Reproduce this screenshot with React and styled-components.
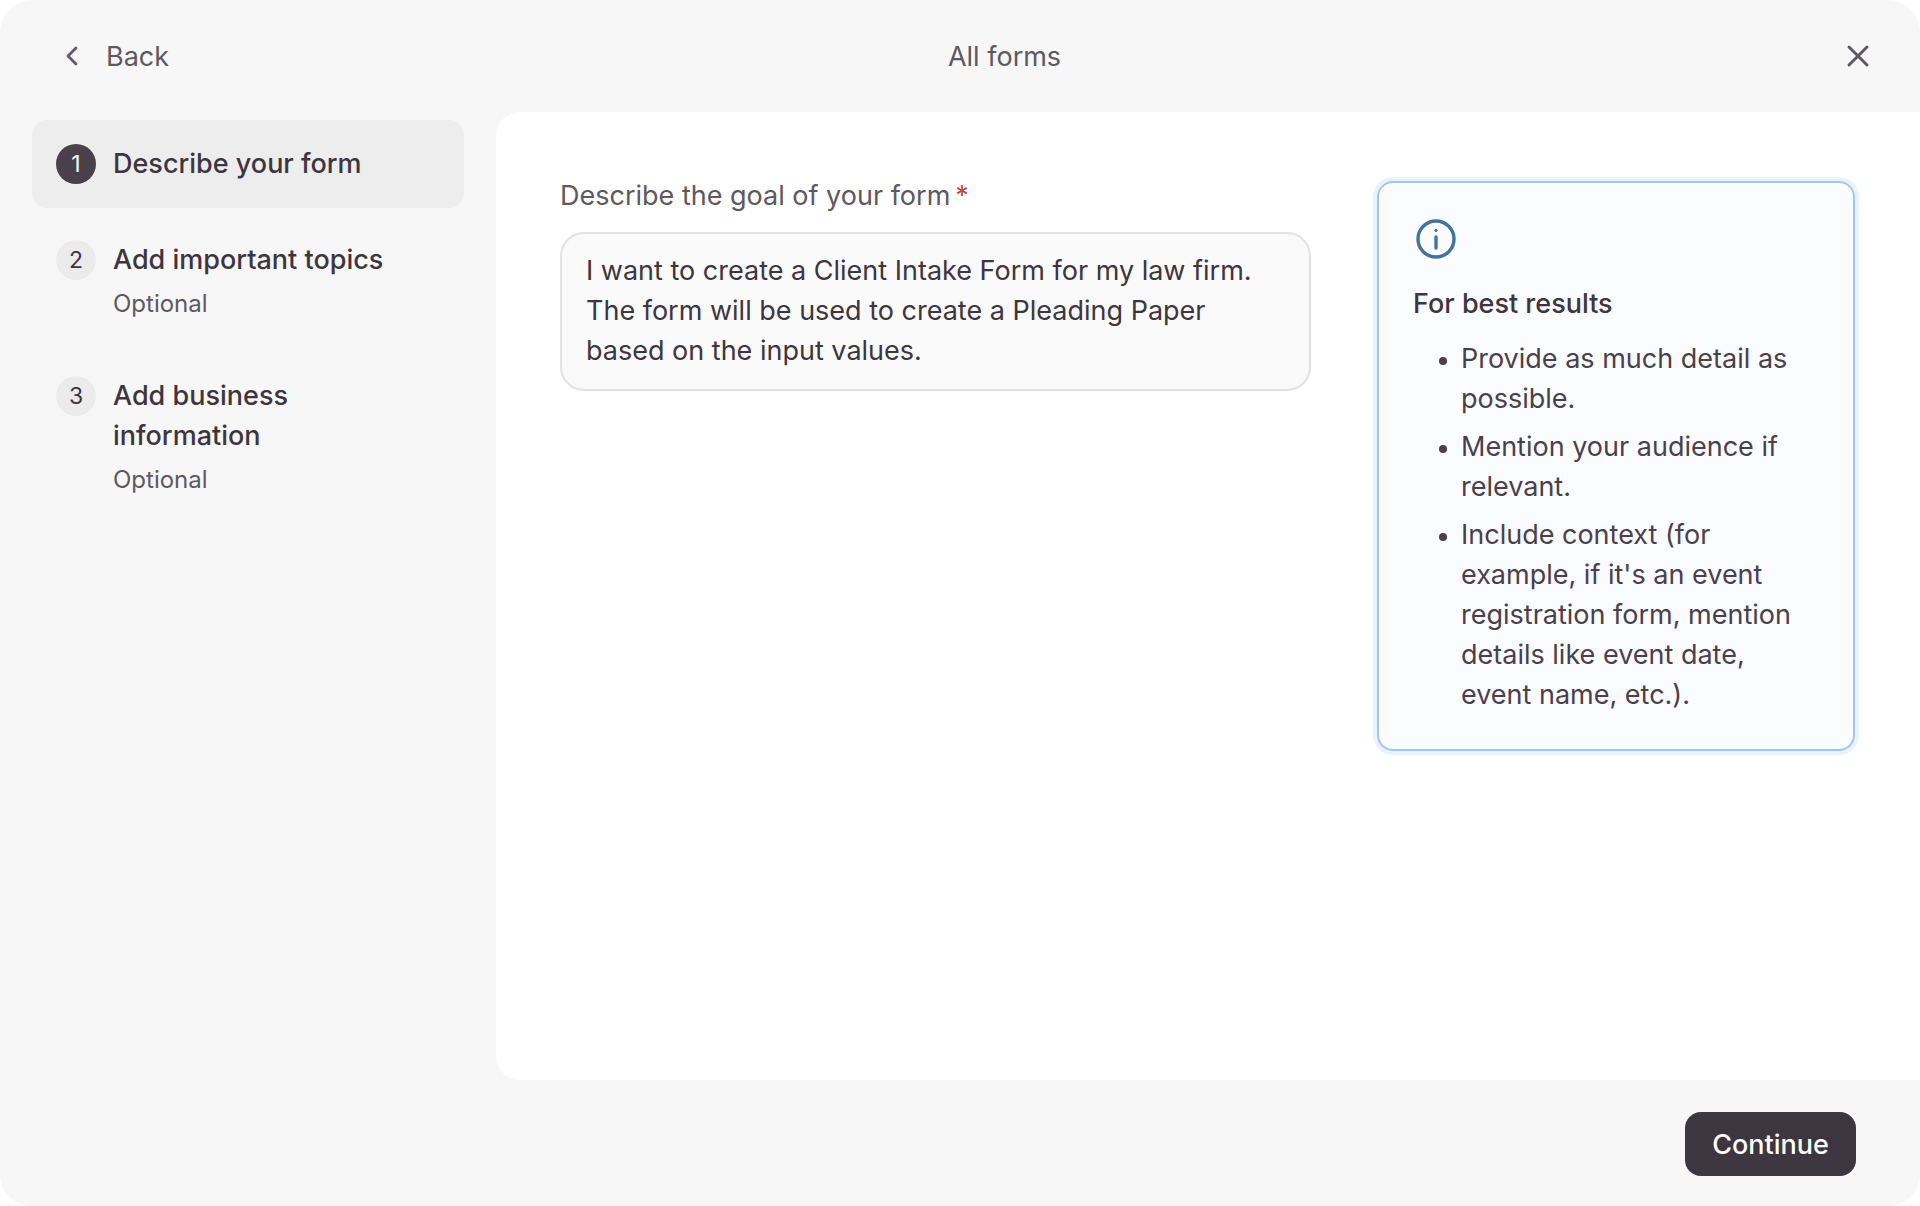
import React from "react";
import styled, { createGlobalStyle } from "styled-components";
import { ChevronLeft, X } from "lucide-react";

const GlobalStyle = createGlobalStyle`
  html, body {
    margin: 0;
    padding: 0;
    background: #fff;
  }
  * {
    box-sizing: border-box;
  }
`;

const Frame = styled.div`
  width: 1920px;
  height: 1206px;
  display: flex;
  flex-direction: column;
  background: #f7f7f7;
  border-radius: 32px;
  overflow: hidden;
  font-family: Inter, "Liberation Sans", sans-serif;
  color: #3d3540;
`;

const Header = styled.header`
  height: 112px;
  flex: none;
  display: flex;
  align-items: center;
  justify-content: space-between;
  padding: 0 44px 0 56px;
`;

const BackButton = styled.div`
  display: flex;
  align-items: center;
  gap: 18px;
  font-size: 27px;
  color: #5d5862;
`;

const HeaderTitle = styled.div`
  font-size: 27px;
  color: #5d5862;
`;

const CloseButton = styled.div`
  display: flex;
  color: #5d5862;
`;

const Body = styled.div`
  flex: 1;
  display: flex;
  min-height: 0;
`;

const Sidebar = styled.nav`
  width: 496px;
  flex: none;
  padding: 8px 32px 0;
  display: flex;
  flex-direction: column;
  gap: 8px;
`;

const Step = styled.div`
  display: flex;
  gap: 17px;
  padding: 24px;
  border-radius: 16px;
  background: ${(p) => (p.$active ? "#ededed" : "transparent")};
`;

const StepNumber = styled.div`
  width: 40px;
  height: 40px;
  flex: none;
  border-radius: 50%;
  display: flex;
  align-items: center;
  justify-content: center;
  font-size: 23px;
  background: ${(p) => (p.$active ? "#4a404c" : "#ebebec")};
  color: ${(p) => (p.$active ? "#fff" : "#3d3540")};
`;

const StepText = styled.div`
  display: flex;
  flex-direction: column;
  gap: 8px;
`;

const StepTitle = styled.div`
  font-size: 27px;
  line-height: 40px;
  font-weight: 500;
`;

const StepHint = styled.div`
  font-size: 24px;
  line-height: 32px;
  color: #5d5862;
`;

const Panel = styled.main`
  flex: 1;
  display: flex;
  justify-content: space-between;
  align-items: flex-start;
  padding: 68px 65px 0 64px;
  background: #fff;
  border-radius: 24px 0 0 24px;
`;

const Field = styled.div`
  width: 751px;
`;

const Label = styled.label`
  display: block;
  font-size: 27px;
  line-height: 32px;
  margin-bottom: 20px;
  color: #5d5862;
`;

const Required = styled.span`
  color: #c0483c;
  margin-left: 5px;
`;

const TextBox = styled.div`
  height: 159px;
  padding: 17px 24px;
  border: 2px solid #e2e2e2;
  border-radius: 24px;
  background: #fafafa;
  font-size: 27px;
  line-height: 40px;
`;

const InfoCard = styled.aside`
  width: 478px;
  height: 570px;
  margin-top: 1px;
  padding: 36px 34px 0;
  border: 2px solid #9fc8f0;
  border-radius: 16px;
  background: #fbfcff;
  box-shadow: 0 0 0 4px #eaf3fc;
`;

const InfoIcon = styled.svg`
  display: block;
  width: 40px;
  height: 40px;
  margin-left: 3px;
  color: #44729f;
`;

const InfoTitle = styled.div`
  margin-top: 25px;
  font-size: 27px;
  line-height: 40px;
  font-weight: 500;
`;

const Tips = styled.ul`
  margin: 15px 0 0;
  padding: 0 0 0 48px;
  display: flex;
  flex-direction: column;
  gap: 8px;
`;

const Tip = styled.li`
  font-size: 27px;
  line-height: 40px;
  color: #4a404c;
  &::marker {
    font-size: 24px;
  }
`;

const Footer = styled.footer`
  height: 126px;
  flex: none;
  display: flex;
  justify-content: flex-end;
  padding: 32px 64px 0 0;
`;

const PrimaryButton = styled.button`
  width: 171px;
  height: 64px;
  border: none;
  border-radius: 16px;
  background: #3d3540;
  color: #fff;
  font-family: inherit;
  font-size: 27px;
  font-weight: 500;
`;

export default function App() {
  return (
    <Frame>
      <GlobalStyle />
      <Header>
        <BackButton>
          <ChevronLeft size={32} strokeWidth={2} />
          Back
        </BackButton>
        <HeaderTitle>All forms</HeaderTitle>
        <CloseButton>
          <X size={36} strokeWidth={2} />
        </CloseButton>
      </Header>
      <Body>
        <Sidebar>
          <Step $active>
            <StepNumber $active>1</StepNumber>
            <StepText>
              <StepTitle>Describe your form</StepTitle>
            </StepText>
          </Step>
          <Step>
            <StepNumber>2</StepNumber>
            <StepText>
              <StepTitle>Add important topics</StepTitle>
              <StepHint>Optional</StepHint>
            </StepText>
          </Step>
          <Step>
            <StepNumber>3</StepNumber>
            <StepText>
              <StepTitle>
                Add business
                <br />
                information
              </StepTitle>
              <StepHint>Optional</StepHint>
            </StepText>
          </Step>
        </Sidebar>
        <Panel>
          <Field>
            <Label>
              Describe the goal of your form
              <Required>*</Required>
            </Label>
            <TextBox>
              I want to create a Client Intake Form for my law firm. The form
              will be used to create a Pleading Paper based on the input values.
            </TextBox>
          </Field>
          <InfoCard>
            <InfoIcon viewBox="0 0 40 40" fill="none" stroke="currentColor" strokeWidth="3.4">
              <circle cx="20" cy="20" r="18" />
              <path d="M20 18v11" strokeLinecap="round" />
              <circle cx="20" cy="11.5" r="1.2" fill="currentColor" strokeWidth="1" />
            </InfoIcon>
            <InfoTitle>For best results</InfoTitle>
            <Tips>
              <Tip>Provide as much detail as possible.</Tip>
              <Tip>Mention your audience if relevant.</Tip>
              <Tip>
                Include context (for example, if it's an event registration
                form, mention details like event date, event name, etc.).
              </Tip>
            </Tips>
          </InfoCard>
        </Panel>
      </Body>
      <Footer>
        <PrimaryButton>Continue</PrimaryButton>
      </Footer>
    </Frame>
  );
}
